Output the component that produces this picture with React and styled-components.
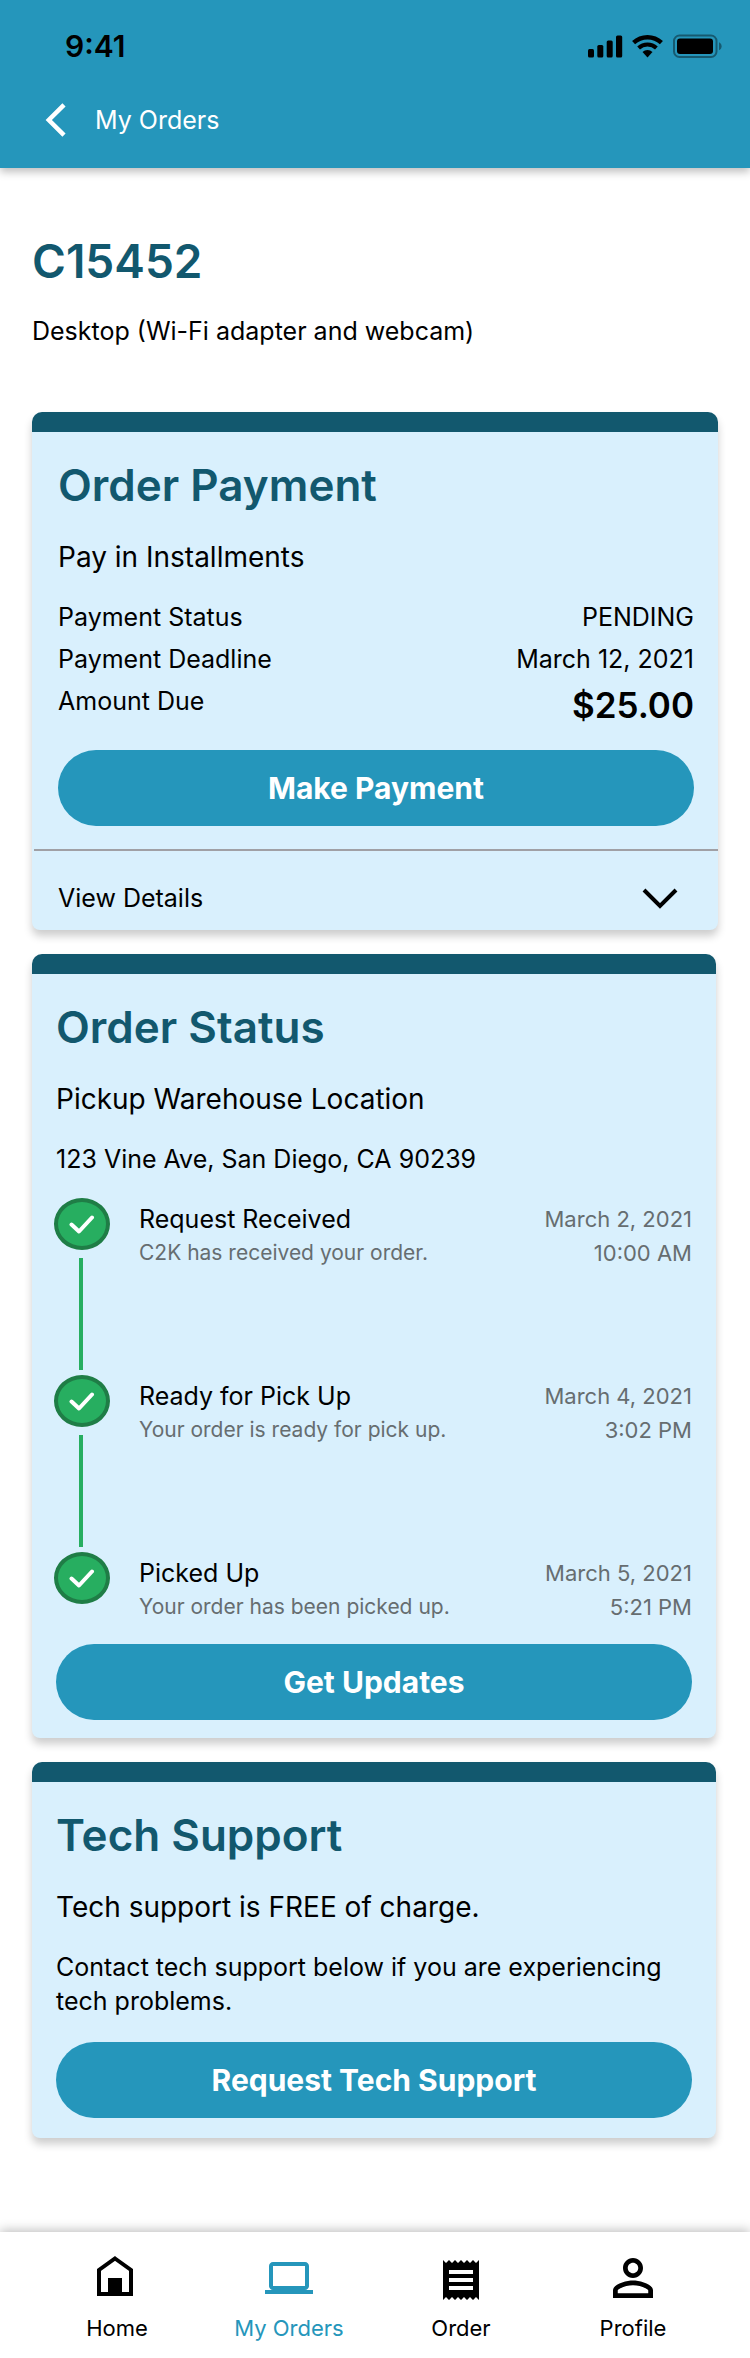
import React, { useState } from "react";
import styled, { createGlobalStyle } from "styled-components";

const color = {
  brand: "#2596bb",
  deep: "#12586e",
  panel: "#d9f0fd",
  muted: "#666d70",
  line: "#a0a0a5",
  green: "#27ae60",
  greenDark: "#1f7d46",
};

const GlobalStyle = createGlobalStyle`
  *, *::before, *::after { box-sizing: border-box; }
  body {
    margin: 0;
    background: #fff;
    color: #000;
    font-family: Inter, "Liberation Sans", sans-serif;
  }
  h1, h2, h3, p, dl, dd, ol { margin: 0; padding: 0; }
  button { font-family: inherit; cursor: pointer; }
`;

const Page = styled.div`
  display: flex;
  flex-direction: column;
  min-height: 100vh;
`;

const Header = styled.header`
  display: flex;
  flex-direction: column;
  height: 168px;
  background: ${color.brand};
  box-shadow: 0 4px 8px rgba(0, 0, 0, 0.25);
`;

const StatusBar = styled.div`
  display: flex;
  align-items: center;
  justify-content: space-between;
  height: 92px;
  padding: 0 28px 0 65px;
`;

const Clock = styled.time`
  font-size: 30px;
  font-weight: 600;
  line-height: 36px;
`;

const BackLink = styled.a`
  display: flex;
  align-items: center;
  align-self: flex-start;
  gap: 27px;
  height: 56px;
  margin-left: 44px;
  color: #fff;
  font-size: 25px;
  line-height: 36px;
  text-decoration: none;
`;

const Main = styled.main`
  display: flex;
  flex: 1;
  flex-direction: column;
  padding: 64px 32px 94px;
`;

const Title = styled.h1`
  color: ${color.deep};
  font-size: 46px;
  font-weight: 600;
  line-height: 58px;
`;

const Summary = styled.p`
  margin-top: 24px;
  font-size: 25px;
  line-height: 34px;
`;

const Cards = styled.div`
  display: flex;
  flex-direction: column;
  gap: 24px;
  margin-top: 64px;
`;

const Card = styled.section`
  margin-right: ${(p) => (p.$wide ? 0 : 2)}px;
  border-top: 20px solid ${color.deep};
  border-radius: 10px 10px 8px 8px;
  background: ${color.panel};
  box-shadow: 0 6px 8px rgba(0, 0, 0, 0.2);
`;

const CardBody = styled.div`
  display: flex;
  flex-direction: column;
  padding: 24px 24px ${(p) => p.$bottom}px ${(p) => p.$left || 24}px;
`;

const Heading = styled.h2`
  color: ${color.deep};
  font-size: 44px;
  font-weight: 600;
  line-height: 58px;
`;

const Lead = styled.p`
  margin-top: 24px;
  font-size: 28px;
  line-height: 38px;
`;

const Copy = styled.p`
  margin-top: 24px;
  font-size: 25px;
  line-height: 34px;
`;

const Facts = styled.dl`
  display: flex;
  flex-direction: column;
  margin-top: 20px;
`;

const Fact = styled.div`
  display: flex;
  align-items: flex-start;
  justify-content: space-between;
  font-size: 25px;
  line-height: 42px;
`;

const Amount = styled.dd`
  font-size: 35px;
  font-weight: 600;
  line-height: 50px;
`;

const Action = styled.button`
  height: 76px;
  margin-top: ${(p) => p.$top}px;
  border: 0;
  border-radius: 38px;
  background: ${color.brand};
  color: #fff;
  font-size: 30px;
  font-weight: 700;
  line-height: 38px;
`;

const DetailsToggle = styled.button`
  display: flex;
  align-items: center;
  justify-content: space-between;
  width: calc(100% - 2px);
  height: 81px;
  margin-left: 2px;
  padding: 14px 40px 0 24px;
  border: 0;
  border-top: 2px solid ${color.line};
  background: transparent;
  color: inherit;
  font-size: 25px;
  line-height: 36px;
`;

const Steps = styled.ol`
  display: flex;
  flex-direction: column;
  margin: 22px 0 0 -2px;
  list-style: none;
`;

const Step = styled.li`
  display: flex;
  min-height: ${(p) => (p.$last ? 72 : 177)}px;
`;

const Marker = styled.div`
  display: flex;
  flex-direction: column;
  align-items: center;
  width: 56px;
  margin-right: 29px;
`;

const Badge = styled.span`
  display: flex;
  align-items: center;
  justify-content: center;
  width: 56px;
  height: 52px;
  border: 4px solid ${color.greenDark};
  border-radius: 50%;
  background: ${color.green};
`;

const Connector = styled.span`
  width: 4px;
  height: 112px;
  margin: 8px 3px 0 0;
  background: ${color.green};
`;

const StepText = styled.div`
  flex: 1;
  padding-top: 4px;
`;

const StepTitle = styled.h3`
  font-size: 25px;
  font-weight: 400;
  line-height: 34px;
`;

const StepNote = styled.p`
  color: ${color.muted};
  font-size: 21px;
  line-height: 34px;
`;

const StepTime = styled.time`
  display: flex;
  flex-direction: column;
  padding-top: 4px;
  color: ${color.muted};
  font-size: 22px;
  line-height: 34px;
  text-align: right;
`;

const TabBar = styled.nav`
  display: grid;
  grid-template-columns: repeat(4, 1fr);
  height: 126px;
  padding: 24px 31px 0;
  background: #fff;
  box-shadow: 0 -2px 10px rgba(0, 0, 0, 0.25);
`;

const Tab = styled.a`
  display: flex;
  flex-direction: column;
  align-items: center;
  gap: 8px;
  color: ${(p) => (p.$active ? color.brand : "#000")};
  font-size: 22px;
  line-height: 32px;
  text-decoration: none;
`;

const StatusIcons = () => (
  <svg width="134" height="24" viewBox="0 0 134 24" role="img" aria-label="Signal, Wi-Fi and battery">
    <rect x="0" y="15" width="6" height="8.5" rx="1.5" />
    <rect x="9.3" y="11" width="6" height="12.5" rx="1.5" />
    <rect x="18.7" y="6.5" width="6" height="17" rx="1.5" />
    <rect x="28" y="1.5" width="6.2" height="22" rx="1.5" />
    <g fill="none" stroke="#000">
      <path d="M45.6 8.7A20.3 20.3 0 0 1 73.4 8.7" strokeWidth="4.4" />
      <path d="M50.6 14A13 13 0 0 1 68.4 14" strokeWidth="4" />
    </g>
    <path d="M54.5 18.1A7.2 7.2 0 0 1 64.5 18.1L59.5 23.4Z" />
    <rect x="86" y="1.5" width="42.5" height="21.5" rx="5.5" fill="none" stroke="#000" strokeOpacity="0.4" strokeWidth="2" />
    <rect x="89" y="4.5" width="36" height="15.5" rx="3" />
    <path d="M131 8.3c1.8.8 2.6 2.2 2.6 4s-.8 3.200-2.600 4z" fillOpacity="0.4" />
  </svg>
);

const BackIcon = () => (
  <svg width="24" height="36" viewBox="0 0 24 36" fill="none" stroke="currentColor" strokeWidth="4.5" aria-hidden="true">
    <path d="M20 2.800 4.800 18 20 33.200" />
  </svg>
);

const ChevronIcon = ({ flipped }) => (
  <svg width="36" height="22" viewBox="0 0 36 22" fill="none" stroke="currentColor" strokeWidth="4" aria-hidden="true">
    <path d={flipped ? "M2 19 18 3 34 19" : "M2 3 18 19 34 3"} />
  </svg>
);

const CheckIcon = () => (
  <svg width="26" height="20" viewBox="0 0 26 20" fill="none" stroke="#fff" strokeWidth="4" strokeLinecap="round" strokeLinejoin="round" aria-hidden="true">
    <path d="M2.500 10.500 10 17.500 23 3.500" />
  </svg>
);

const iconProps = { width: 48, height: 48, viewBox: "0 0 48 48", fill: "currentColor", "aria-hidden": true };

const HomeIcon = () => (
  <svg {...iconProps}>
    <path d="M22 2.500 38 14V38H6V14Z" fill="none" stroke="currentColor" strokeWidth="4" />
    <path d="M15 22h14v17H15z" />
  </svg>
);

const LaptopIcon = () => (
  <svg {...iconProps}>
    <path d="M40 34c2.200 0 4-1.800 4-4V10c0-2.200-1.800-4-4-4H8c-2.200 0-4 1.800-4 4v20c0 2.200 1.800 4 4 4H0v4h48v-4zM8 10h32v20H8z" />
  </svg>
);

const ReceiptIcon = () => (
  <svg {...iconProps}>
    <path
      transform="scale(2)"
      d="M18 17H6v-2h12v2zm0-4H6v-2h12v2zm0-4H6V7h12v2zM3 22l1.500-1.500L6 22l1.500-1.500L9 22l1.500-1.500L12 22l1.500-1.500L15 22l1.500-1.500L18 22l1.500-1.500L21 22V2l-1.500 1.500L18 2l-1.500 1.500L15 2l-1.500 1.500L12 2l-1.500 1.500L9 2 7.500 3.500 6 2 4.500 3.500 3 2v20z"
    />
  </svg>
);

const PersonIcon = () => (
  <svg {...iconProps}>
    <path
      transform="translate(-6 -8) scale(2.5)"
      d="M12 5.900c1.160 0 2.100.94 2.100 2.100s-.94 2.100-2.100 2.100S9.900 9.160 9.900 8s.94-2.100 2.100-2.100m0 9c2.970 0 6.100 1.460 6.100 2.100v1.100H5.900V17c0-.64 3.130-2.100 6.100-2.100M12 4C9.790 4 8 5.790 8 8s1.790 4 4 4 4-1.790 4-4-1.790-4-4-4zm0 9c-2.670 0-8 1.340-8 4v3h16v-3c0-2.660-5.330-4-8-4z"
    />
  </svg>
);

const steps = [
  { title: "Request Received", note: "C2K has received your order.", date: "March 2, 2021", time: "10:00 AM" },
  { title: "Ready for Pick Up", note: "Your order is ready for pick up.", date: "March 4, 2021", time: "3:02 PM" },
  { title: "Picked Up", note: "Your order has been picked up.", date: "March 5, 2021", time: "5:21 PM" },
];

const tabs = [
  { label: "Home", Icon: HomeIcon },
  { label: "My Orders", Icon: LaptopIcon, active: true },
  { label: "Order", Icon: ReceiptIcon },
  { label: "Profile", Icon: PersonIcon },
];

export default function App() {
  const [open, setOpen] = useState(false);

  return (
    <Page>
      <GlobalStyle />
      <Header>
        <StatusBar>
          <Clock>9:41</Clock>
          <StatusIcons />
        </StatusBar>
        <BackLink href="#orders">
          <BackIcon />
          My Orders
        </BackLink>
      </Header>

      <Main>
        <Title>C15452</Title>
        <Summary>Desktop (Wi-Fi adapter and webcam)</Summary>

        <Cards>
          <Card $wide>
            <CardBody $left={26} $bottom={23}>
              <Heading>Order Payment</Heading>
              <Lead>Pay in Installments</Lead>
              <Facts>
                <Fact>
                  <dt>Payment Status</dt>
                  <dd>PENDING</dd>
                </Fact>
                <Fact>
                  <dt>Payment Deadline</dt>
                  <dd>March 12, 2021</dd>
                </Fact>
                <Fact>
                  <dt>Amount Due</dt>
                  <Amount>$25.00</Amount>
                </Fact>
              </Facts>
              <Action type="button" $top={20}>Make Payment</Action>
            </CardBody>
            <DetailsToggle type="button" aria-expanded={open} onClick={() => setOpen(!open)}>
              View Details
              <ChevronIcon flipped={open} />
            </DetailsToggle>
          </Card>

          <Card>
            <CardBody $bottom={18}>
              <Heading>Order Status</Heading>
              <Lead>Pickup Warehouse Location</Lead>
              <Copy>123 Vine Ave, San Diego, CA 90239</Copy>
              <Steps>
                {steps.map((step, i) => (
                  <Step key={step.title} $last={i === steps.length - 1}>
                    <Marker>
                      <Badge>
                        <CheckIcon />
                      </Badge>
                      {i < steps.length - 1 && <Connector />}
                    </Marker>
                    <StepText>
                      <StepTitle>{step.title}</StepTitle>
                      <StepNote>{step.note}</StepNote>
                    </StepText>
                    <StepTime>
                      <span>{step.date}</span>
                      <span>{step.time}</span>
                    </StepTime>
                  </Step>
                ))}
              </Steps>
              <Action type="button" $top={20}>Get Updates</Action>
            </CardBody>
          </Card>

          <Card>
            <CardBody $bottom={20}>
              <Heading>Tech Support</Heading>
              <Lead>Tech support is FREE of charge.</Lead>
              <Copy>Contact tech support below if you are experiencing tech problems.</Copy>
              <Action type="button" $top={24}>Request Tech Support</Action>
            </CardBody>
          </Card>
        </Cards>
      </Main>

      <TabBar aria-label="Main">
        {tabs.map(({ label, Icon, active }) => (
          <Tab key={label} href={`#${label.toLowerCase().replace(" ", "-")}`} $active={active} aria-current={active ? "page" : undefined}>
            <Icon />
            {label}
          </Tab>
        ))}
      </TabBar>
    </Page>
  );
}
